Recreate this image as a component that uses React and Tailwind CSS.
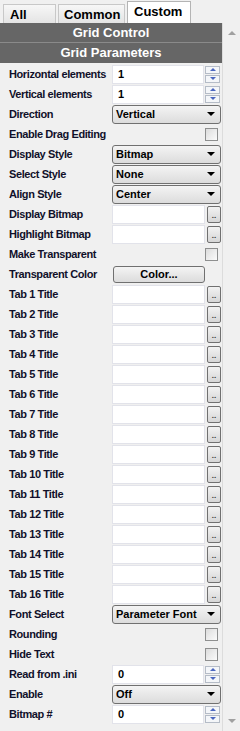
import React from 'react';

const Spin = ({ value }) => (
  <div className="flex items-center h-[20px]">
    <div className="w-[92px] h-[19px] bg-white border border-[#e2e3ea] pl-[5px] flex items-center text-[11px] font-bold text-[#000]">
      {value}
    </div>
    <div className="ml-px flex flex-col gap-px">
      <div className="w-[15px] h-[8px] border border-[#b5bcc7] bg-[#f4f6f9] flex items-center justify-center">
        <div className="w-0 h-0 border-l-[3px] border-r-[3px] border-b-[3px] border-l-transparent border-r-transparent border-b-[#4a66c0]" />
      </div>
      <div className="w-[15px] h-[8px] border border-[#b5bcc7] bg-[#f4f6f9] flex items-center justify-center">
        <div className="w-0 h-0 border-l-[3px] border-r-[3px] border-t-[3px] border-l-transparent border-r-transparent border-t-[#4a66c0]" />
      </div>
    </div>
  </div>
);

const Select = ({ value }) => (
  <div className="w-[109px] h-[19px] rounded-[3px] border border-[#707070] bg-gradient-to-b from-[#f4f4f4] to-[#dcdcdc] flex items-center justify-between pl-[3px] pr-[5px] text-[11px] font-bold text-[#000]">
    <span>{value}</span>
    <div className="w-0 h-0 border-l-[4px] border-r-[4px] border-t-[4px] border-l-transparent border-r-transparent border-t-black" />
  </div>
);

const Check = () => (
  <div className="w-[110px] flex justify-end pr-[4px]">
    <div className="w-[13px] h-[13px] border border-[#8e8f8f] bg-gradient-to-br from-[#dcdcdc] to-[#fbfbfb]" />
  </div>
);

const Browse = () => (
  <div className="flex items-center h-[20px]">
    <div className="w-[93px] h-[19px] bg-white border border-[#e2e3ea]" />
    <div className="ml-[2px] w-[14px] h-[17px] rounded-[2px] border border-[#707070] bg-gradient-to-b from-[#f2f2f2] to-[#d6d6d6] flex items-end justify-center pb-[2px]">
      <span className="text-[8px] leading-[8px] font-bold text-[#333]">..</span>
    </div>
  </div>
);

const ColorBtn = () => (
  <div className="ml-px w-[92px] h-[17px] rounded-[3px] border border-[#707070] bg-gradient-to-b from-[#f4f4f4] to-[#dcdcdc] flex items-center justify-center text-[11px] font-bold text-[#000]">
    Color...
  </div>
);

const rows = [
  ['Horizontal elements', <Spin value="1" />],
  ['Vertical elements', <Spin value="1" />],
  ['Direction', <Select value="Vertical" />],
  ['Enable Drag Editing', <Check />],
  ['Display Style', <Select value="Bitmap" />],
  ['Select Style', <Select value="None" />],
  ['Align Style', <Select value="Center" />],
  ['Display Bitmap', <Browse />],
  ['Highlight Bitmap', <Browse />],
  ['Make Transparent', <Check />],
  ['Transparent Color', <ColorBtn />],
  ...Array.from({ length: 16 }, (_, i) => [`Tab ${i + 1} Title`, <Browse />]),
  ['Font Select', <Select value="Parameter Font" />],
  ['Rounding', <Check />],
  ['Hide Text', <Check />],
  ['Read from .ini', <Spin value="0" />],
  ['Enable', <Select value="Off" />],
  ['Bitmap #', <Spin value="0" />],
];

export default function App() {
  return (
    <div className="w-[240px] h-[731px] bg-[#f0f0f0] overflow-hidden font-['Liberation_Sans',Arial,sans-serif] flex flex-col">
      <div className="h-[23px] flex items-end shrink-0">
        <div className="ml-[3px] w-[53px] h-[19px] border border-b-0 border-[#c8c8c8] bg-gradient-to-b from-[#f7f7f7] to-[#e4e4e4] pl-[6px] text-[13px] font-bold leading-[19px] text-black">
          All
        </div>
        <div className="ml-[2px] w-[67px] h-[19px] border border-b-0 border-[#c8c8c8] bg-gradient-to-b from-[#f7f7f7] to-[#e4e4e4] pl-[5px] text-[13px] font-bold leading-[19px] text-black">
          Common
        </div>
        <div className="ml-[2px] w-[64px] h-[22px] border border-b-0 border-[#b4b4b4] bg-white pl-[6px] text-[13px] font-bold leading-[20px] text-black">
          Custom
        </div>
      </div>
      <div className="flex flex-1 min-h-0">
        <div className="w-[222px] flex flex-col">
          <div className="h-[20px] bg-[#666666] text-white text-[13px] font-bold flex items-center justify-center border-b border-[#8a8a8a]">
            Grid Control
          </div>
          <div className="h-[20px] bg-[#666666] text-white text-[13px] font-bold flex items-center justify-center">
            Grid Parameters
          </div>
          <div className="flex flex-col pt-px">
            {rows.map(([label, control], i) => (
              <div key={i} className="h-[20px] flex items-center">
                <div className="w-[112px] pl-[9px] text-[11px] tracking-[-0.4px] font-bold text-[#10102a] whitespace-nowrap">{label}</div>
                {control}
              </div>
            ))}
          </div>
        </div>
        <div className="w-[18px] border-l border-[#dcdcdc] bg-[#f0f0f0] flex flex-col justify-between items-center py-[8px]">
          <div className="w-0 h-0 border-l-[4px] border-r-[4px] border-b-[4px] border-l-transparent border-r-transparent border-b-[#a0a0a0]" />
          <div className="w-0 h-0 border-l-[4px] border-r-[4px] border-t-[4px] border-l-transparent border-r-transparent border-t-[#a0a0a0]" />
        </div>
      </div>
    </div>
  );
}
